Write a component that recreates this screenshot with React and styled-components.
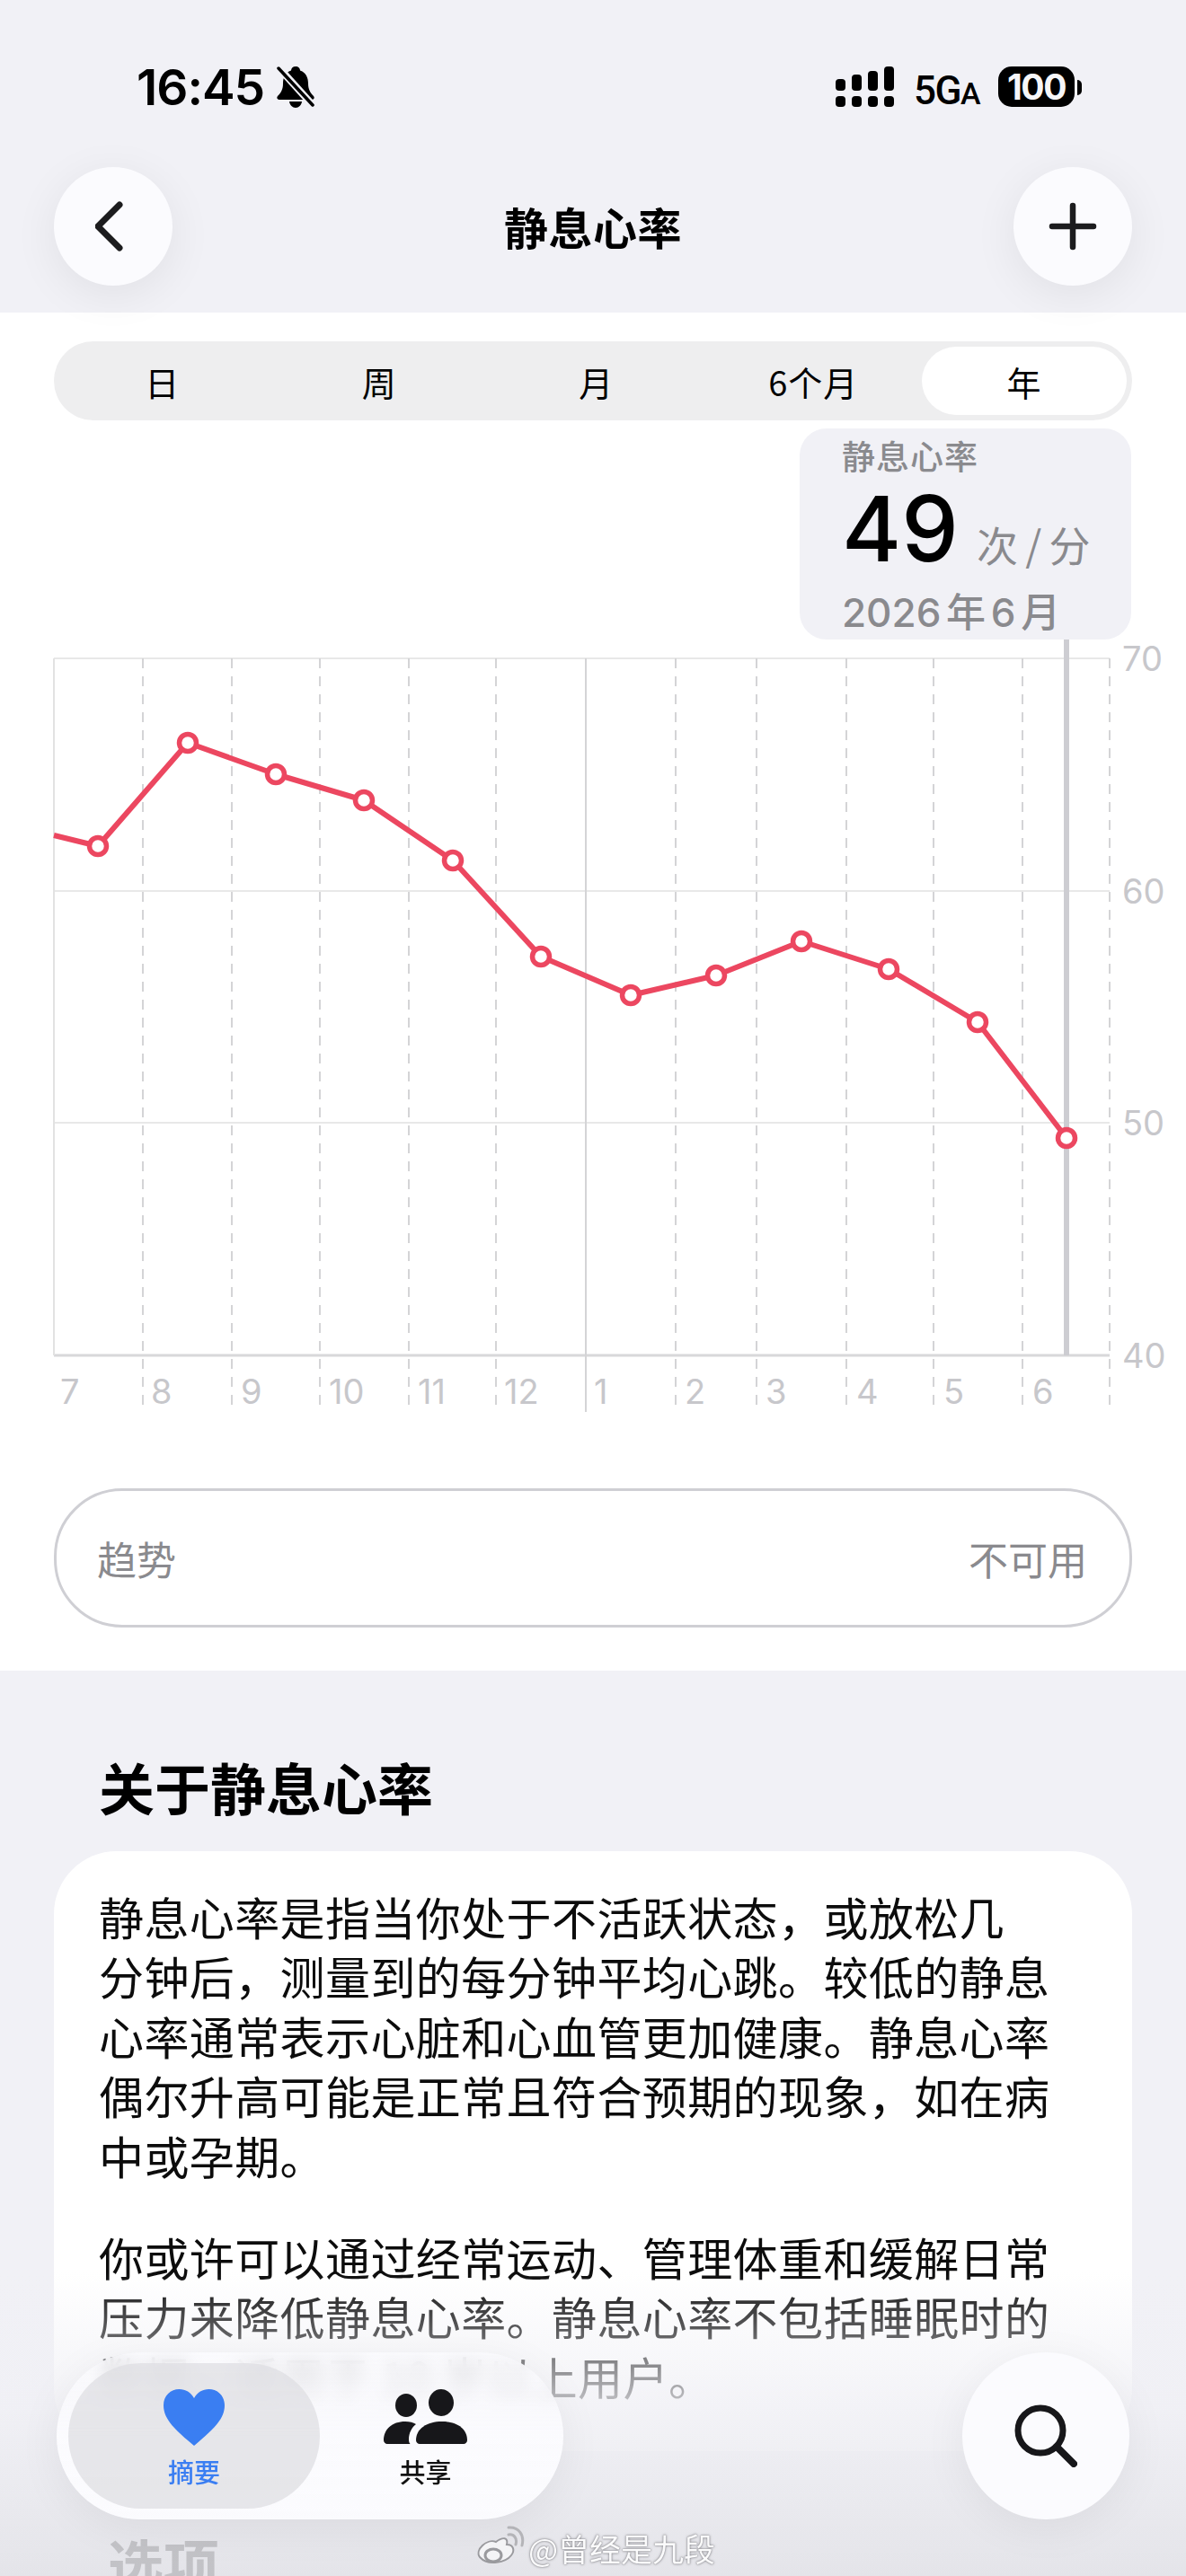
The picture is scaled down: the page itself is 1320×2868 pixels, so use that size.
import React from 'react';
import styled, { createGlobalStyle } from 'styled-components';

const CJK = `"Noto Sans CJK SC", "Noto Sans", sans-serif`;
const LATIN = `Inter, "Noto Sans CJK SC", sans-serif`;

const GlobalStyle = createGlobalStyle`
  html, body { margin: 0; padding: 0; background: #f1f1f6; }
  * { box-sizing: border-box; }
`;

const Page = styled.div`
  position: relative;
  width: 1320px;
  height: 2868px;
  overflow: hidden;
  background: #f1f1f6;
  font-family: ${CJK};
  color: #000;
`;

const Header = styled.header`
  position: relative;
  z-index: 2;
  height: 348px;
  background: #f1f1f6;
`;

const StatusBar = styled.div`
  height: 186px;
  padding: 74px 116px 0 152px;
  display: flex;
  align-items: flex-start;
  justify-content: space-between;
`;

const StatusLeft = styled.div`
  display: flex;
  align-items: center;
  gap: 14px;
  height: 46px;
`;

const Clock = styled.span`
  font-family: ${LATIN};
  font-size: 55px;
  font-weight: 600;
  letter-spacing: -1px;
  line-height: 46px;
`;

const StatusRight = styled.div`
  display: flex;
  align-items: flex-start;
  height: 46px;
`;

const Network = styled.span`
  margin: 5px 21px 0 22px;
  font-family: "Roboto", sans-serif;
  font-size: 44px;
  line-height: 44px;
  font-weight: 500;
  letter-spacing: -1.5px;
  small { font-size: 34px; font-weight: 500; }
`;

const Battery = styled.span`
  width: 85px;
  height: 45px;
  border-radius: 15px;
  background: #000;
  color: #f6f6f8;
  font-family: ${LATIN};
  font-size: 39px;
  font-weight: 700;
  letter-spacing: -1.5px;
  line-height: 45px;
  text-align: center;
`;

const BatteryCap = styled.span`
  width: 5px;
  height: 17px;
  margin: 15px 0 0 3px;
  background: #000;
  border-radius: 0 9px 9px 0;
`;

const NavBar = styled.div`
  padding: 0 60px;
  display: flex;
  align-items: center;
  justify-content: space-between;
`;

const RoundButton = styled.button`
  width: 132px;
  height: 132px;
  padding: 0;
  border: none;
  border-radius: 50%;
  background: #fbfbfe;
  box-shadow: 0 10px 50px rgba(0, 0, 0, 0.07);
  display: flex;
  align-items: center;
  justify-content: center;
`;

const NavTitle = styled.h1`
  margin: 0;
  font-size: 49px;
  line-height: 60px;
  font-weight: 700;
  letter-spacing: 0.5px;
`;

const ChartSection = styled.section`
  position: relative;
  height: 1512px;
  padding: 32px 60px 0;
  background: #fff;
`;

const Segments = styled.div`
  position: relative;
  height: 88px;
  padding: 6px 6px 6px 0;
  border-radius: 44px;
  background: #eeeeef;
  display: grid;
  grid-template-columns: repeat(4, 1fr) 228px;
`;

const Segment = styled.div`
  border-radius: 38px;
  background: ${(p) => (p.$active ? '#fff' : 'transparent')};
  display: flex;
  align-items: center;
  justify-content: center;
  font-size: 38px;
  font-weight: 400;
  letter-spacing: 1px;
  color: #000;
`;

const Chart = styled.svg`
  display: block;
  position: absolute;
  left: 0;
  top: 0;
  width: 1320px;
  height: 1300px;
`;

const AxisLabel = styled.text`
  font-family: ${LATIN};
  font-size: 38px;
  fill: #c7c7cb;
`;

const Callout = styled.div`
  position: absolute;
  left: 890px;
  top: 129px;
  width: 369px;
  height: 235px;
  padding: 8px 0 0 47px;
  border-radius: 30px;
  background: #f1f1f6;
  color: #8a8a8e;
`;

const CalloutTitle = styled.div`
  font-size: 37px;
  line-height: 44px;
  letter-spacing: 1px;
  font-weight: 500;
`;

const CalloutValue = styled.div`
  display: flex;
  align-items: baseline;
  height: 92px;
  margin-top: 19px;
`;

const BigValue = styled.span`
  font-family: ${LATIN};
  font-size: 101px;
  line-height: 80px;
  font-weight: 500;
  color: #000;
  margin-right: 20px;
`;

const Unit = styled.span`
  font-size: 46px;
  line-height: 60px;
  font-weight: 400;
  letter-spacing: 1px;
  word-spacing: -4px;
`;

const CalloutDate = styled.div`
  margin-top: 17px;
  font-family: ${LATIN};
  font-size: 44px;
  line-height: 50px;
  font-weight: 500;
  word-spacing: -6px;
`;

const TrendRow = styled.div`
  position: absolute;
  left: 60px;
  right: 60px;
  top: 1309px;
  height: 155px;
  padding: 0 47px 0 45px;
  border: 3px solid #cfcfd4;
  border-radius: 76px;
  display: flex;
  align-items: center;
  justify-content: space-between;
  color: #8a8a8e;
  font-size: 44px;
`;

const About = styled.section`
  padding: 0 60px;
`;

const SectionTitle = styled.h2`
  margin: 0;
  padding: ${(p) => p.$pad};
  font-size: 62px;
  line-height: 80px;
  font-weight: 700;
`;

const Card = styled.div`
  height: 668px;
  padding: 39px 50px 0;
  margin-top: 32px;
  border-radius: 70px;
  background: #fff;
`;

const Paragraph = styled.p`
  margin: 0 0 47px;
  font-size: 50px;
  line-height: 66.4px;
  letter-spacing: 0.4px;
  color: #0c0c0c;
  white-space: nowrap;
`;

const BottomFade = styled.div`
  position: absolute;
  z-index: 3;
  left: 0;
  right: 0;
  top: 2530px;
  bottom: 0;
  pointer-events: none;
  background: linear-gradient(
    to bottom,
    rgba(241, 241, 246, 0) 0%,
    rgba(240, 240, 245, 0.82) 45%,
    rgba(226, 226, 231, 0.86) 100%
  );
`;

const TabBar = styled.nav`
  position: absolute;
  z-index: 4;
  left: 63px;
  top: 2619px;
  width: 564px;
  height: 186px;
  padding: 12px 13px;
  border-radius: 93px;
  background: linear-gradient(
    to bottom,
    rgba(251, 251, 254, 0.68) 0%,
    rgba(251, 251, 254, 0.72) 30%,
    rgba(251, 251, 254, 0.98) 50%,
    #fbfbfe 100%
  );
  backdrop-filter: blur(9px);
  box-shadow: 0 10px 50px rgba(0, 0, 0, 0.06);
  display: flex;
`;

const Tab = styled.div`
  width: ${(p) => (p.$active ? '280px' : '235px')};
  border-radius: 81px;
  padding-top: 29px;
  background: ${(p) => (p.$active ? 'rgba(222, 222, 226, 0.72)' : 'transparent')};
  color: ${(p) => (p.$active ? '#3a7ef2' : '#111')};
  display: flex;
  flex-direction: column;
  align-items: center;
`;

const TabLabel = styled.span`
  margin-top: 10px;
  font-size: 29px;
  line-height: 36px;
  font-weight: 500;
`;

const SearchButton = styled.button`
  position: absolute;
  z-index: 4;
  left: 1071px;
  top: 2619px;
  width: 186px;
  height: 186px;
  padding: 0;
  border: none;
  border-radius: 50%;
  background: #fbfbfe;
  box-shadow: 0 10px 50px rgba(0, 0, 0, 0.06);
  display: flex;
  align-items: center;
  justify-content: center;
`;

const Watermark = styled.div`
  position: absolute;
  z-index: 5;
  left: 530px;
  top: 2812px;
  display: flex;
  align-items: center;
  gap: 4px;
  font-size: 35px;
  line-height: 50px;
  color: #fbfbfc;
  text-shadow: 0 0 3px #77777c, 0 0 1px #77777c;
`;

const xGrid = [159, 258, 356, 455, 552, 752, 842, 942, 1039, 1138, 1235];
const yGrid = [733, 992, 1250];
const points = [
  [109, 942], [209, 827], [307, 862], [405, 891], [504, 958], [602, 1065],
  [702, 1108], [797, 1086], [892, 1048], [989, 1079], [1088, 1138], [1187, 1267],
];
const months = [
  ['7', 67], ['8', 168], ['9', 268], ['10', 366], ['11', 465], ['12', 561],
  ['1', 661], ['2', 762], ['3', 852], ['4', 953], ['5', 1050], ['6', 1149],
];
const yLabels = [['70', 733], ['60', 992], ['50', 1250], ['40', 1509]];
const tabs = ['日', '周', '月', '6个月', '年'];

// chart coordinates are page coordinates, the svg starts at y = 348
const HeartRateChart = () => (
  <Chart viewBox="0 348 1320 1300">
    {yGrid.map((y) => (
      <line key={y} x1="60" x2="1235" y1={y} y2={y} stroke="#e8e8e8" strokeWidth="2" />
    ))}
    <line x1="60" x2="1235" y1="1509" y2="1509" stroke="#d8d8da" strokeWidth="3" />
    <line x1="60" x2="60" y1="733" y2="1509" stroke="#e2e2e2" strokeWidth="2" />
    <line x1="652" x2="652" y1="733" y2="1572" stroke="#d4d4d6" strokeWidth="2" />
    {xGrid.map((x) => (
      <line key={x} x1={x} x2={x} y1="733" y2="1572" stroke="#d4d4d6" strokeWidth="2" strokeDasharray="11 9" />
    ))}
    <line x1="1187" x2="1187" y1="712" y2="1509" stroke="#cdcdd2" strokeWidth="6" />
    <polyline
      points={`60,930 ${points.map((p) => p.join(',')).join(' ')}`}
      fill="none"
      stroke="#ec4760"
      strokeWidth="6"
      strokeLinejoin="round"
    />
    {points.map(([x, y]) => (
      <circle key={x} cx={x} cy={y} r="9.5" fill="#fff" stroke="#ec4760" strokeWidth="5.5" />
    ))}
    {months.map(([m, x]) => (
      <AxisLabel key={x} x={x} y="1563">{m}</AxisLabel>
    ))}
    {yLabels.map(([v, y]) => (
      <AxisLabel key={v} x="1249" y={y + 14}>{v}</AxisLabel>
    ))}
  </Chart>
);

const App = () => (
  <Page>
    <GlobalStyle />
    <Header>
      <StatusBar>
        <StatusLeft>
          <Clock>16:45</Clock>
          <svg width="42" height="46" viewBox="0 0 42 46">
            <path d="M21 0c-3 0-5 2-5 4.500C9 7 7 13 7 19c0 6-2 10-6 14-1.500 2-.5 4 2 4h36c2.500 0 3.500-2 2-4-4-4-6-8-6-14 0-6-2-12-9-14.500C26 2 24 0 21 0z" fill="#000" />
            <path d="M14 39h14c-.5 4-3.500 7-7 7s-6.500-3-7-7z" fill="#000" />
            <path d="M2 1l38 42" stroke="#f1f1f6" strokeWidth="8" />
            <path d="M2 2l38 41" stroke="#000" strokeWidth="3.500" strokeLinecap="round" />
          </svg>
        </StatusLeft>
        <StatusRight>
          <svg width="65" height="45" viewBox="0 0 65 45" fill="#000">
            <rect x="0" y="14" width="11" height="13" rx="4" />
            <rect x="18" y="9" width="11" height="18" rx="4" />
            <rect x="36" y="5" width="11" height="22" rx="4" />
            <rect x="54" y="0" width="11" height="27" rx="4" />
            <rect x="0" y="33" width="11" height="12" rx="4" />
            <rect x="18" y="33" width="11" height="12" rx="4" />
            <rect x="36" y="33" width="11" height="12" rx="4" />
            <rect x="54" y="33" width="11" height="12" rx="4" />
          </svg>
          <Network>5G<small>A</small></Network>
          <Battery>100</Battery>
          <BatteryCap />
        </StatusRight>
      </StatusBar>
      <NavBar>
        <RoundButton>
          <svg width="40" height="62" viewBox="0 0 40 62" fill="none">
            <path d="M27 7 L3 31 L27 55" stroke="#1c1c1e" strokeWidth="7" strokeLinecap="round" strokeLinejoin="round" />
          </svg>
        </RoundButton>
        <NavTitle>静息心率</NavTitle>
        <RoundButton>
          <svg width="56" height="56" viewBox="0 0 56 56" fill="none">
            <path d="M28 5v46M5 28h46" stroke="#1c1c1e" strokeWidth="6.500" strokeLinecap="round" />
          </svg>
        </RoundButton>
      </NavBar>
    </Header>

    <ChartSection>
      <HeartRateChart />
      <Segments>
        {tabs.map((t) => (
          <Segment key={t} $active={t === '年'}>{t}</Segment>
        ))}
      </Segments>
      <Callout>
        <CalloutTitle>静息心率</CalloutTitle>
        <CalloutValue>
          <BigValue>49</BigValue>
          <Unit>次 / 分</Unit>
        </CalloutValue>
        <CalloutDate>2026 年 6 月</CalloutDate>
      </Callout>
      <TrendRow>
        <span>趋势</span>
        <span>不可用</span>
      </TrendRow>
    </ChartSection>

    <About>
      <SectionTitle $pad="89px 50px 0">关于静息心率</SectionTitle>
      <Card>
        <Paragraph>
          静息心率是指当你处于不活跃状态，或放松几<br />
          分钟后，测量到的每分钟平均心跳。较低的静息<br />
          心率通常表示心脏和心血管更加健康。静息心率<br />
          偶尔升高可能是正常且符合预期的现象，如在病<br />
          中或孕期。
        </Paragraph>
        <Paragraph>
          你或许可以通过经常运动、管理体重和缓解日常<br />
          压力来降低静息心率。静息心率不包括睡眠时的<br />
          数据，适用于 10 岁以上用户。
        </Paragraph>
      </Card>
      <SectionTitle $pad="84px 60px 0">选项</SectionTitle>
    </About>

    <BottomFade />

    <TabBar>
      <Tab $active>
        <svg width="68" height="63" viewBox="0 0 68 63">
          <path d="M34 63C14 46 0 34 0 18 0 7 8 0 17.500 0 24.500 0 30.500 3.500 34 10 37.500 3.500 43.500 0 50.500 0 60 0 68 7 68 18 68 34 54 46 34 63z" fill="#3a7ef2" />
        </svg>
        <TabLabel>摘要</TabLabel>
      </Tab>
      <Tab>
        <svg width="93" height="63" viewBox="0 0 93 63" fill="#17171a">
          <ellipse cx="25" cy="18" rx="12" ry="13" />
          <ellipse cx="64" cy="15" rx="14" ry="15" />
          <path d="M0 57c0-12 9-21 24-21 5 0 9 1 12 3-5 4-8 10-8 17 0 2 .5 4 1.500 5H4c-2 0-4-2-4-4z" />
          <path d="M36 57c0-13 12-21 29-21s28 8 28 21c0 2-2 4-4 4H40c-2 0-4-2-4-4z" />
        </svg>
        <TabLabel>共享</TabLabel>
      </Tab>
    </TabBar>

    <SearchButton>
      <svg width="70" height="70" viewBox="0 0 70 70" fill="none">
        <circle cx="29" cy="29" r="25" stroke="#17171a" strokeWidth="7" />
        <path d="M47 47L66 66" stroke="#17171a" strokeWidth="8" strokeLinecap="round" />
      </svg>
    </SearchButton>

    <Watermark>
      <svg width="54" height="50" viewBox="0 0 54 50" fill="none">
        <path d="M22 18c8-6 14-5 12 3 8 0 9 7 5 12-6 8-26 12-35 2C-2 27 12 14 22 18z" fill="#f4f4f6" stroke="#9a9a9e" strokeWidth="2" />
        <ellipse cx="19" cy="33" rx="9" ry="7" fill="#f4f4f6" stroke="#9a9a9e" strokeWidth="3" />
        <path d="M36 10c6-1 10 4 8 11M36 2c11-1 18 8 15 20" stroke="#b4b4b8" strokeWidth="3" strokeLinecap="round" />
      </svg>
      <span>@曾经是九段</span>
    </Watermark>
  </Page>
);

export default App;
